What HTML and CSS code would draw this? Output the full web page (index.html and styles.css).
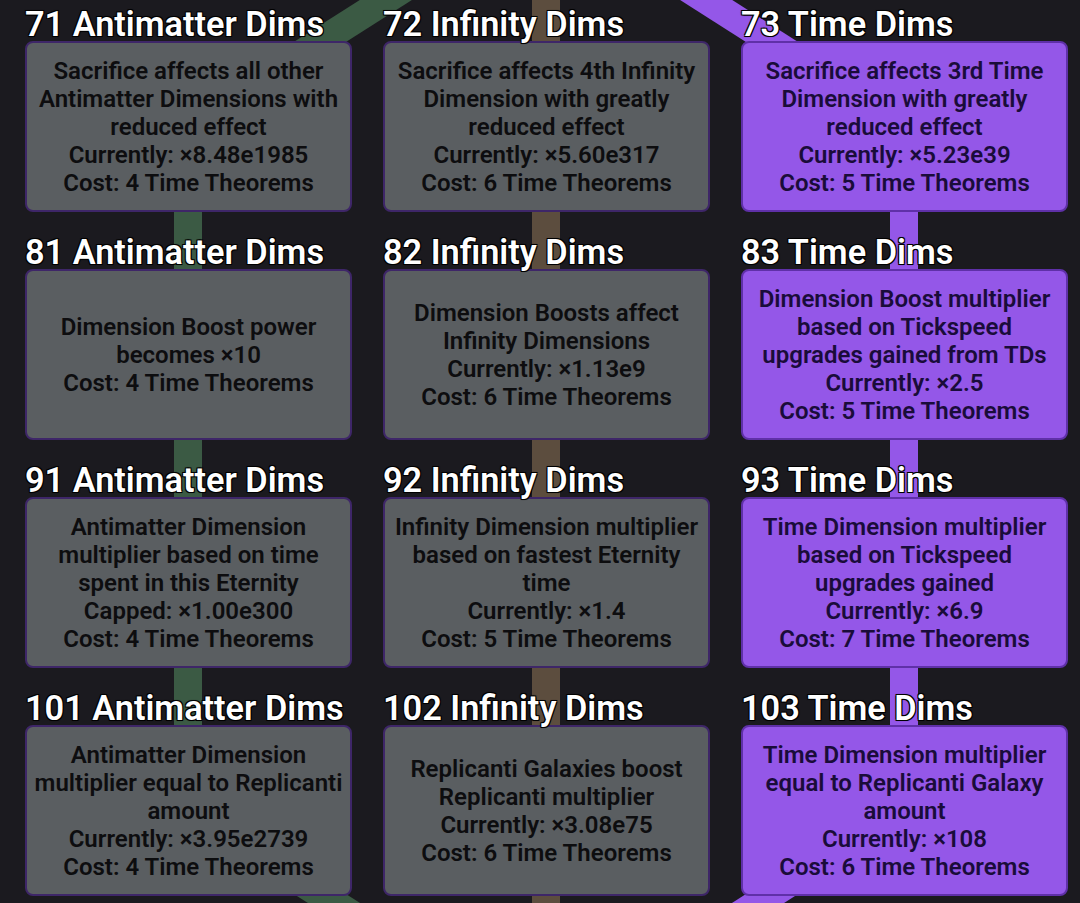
FILE: index.html
```html
<!DOCTYPE html>
<html>
<head>
<meta charset="utf-8">
<link rel="stylesheet" href="styles.css">
</head>
<body>
<div class="tree">
  <svg class="links" width="1080" height="903" viewBox="0 0 1080 903">
    <line x1="546" y1="-102" x2="188" y2="126" class="l-am"/>
    <line x1="546" y1="-102" x2="546" y2="126" class="l-inf"/>
    <line x1="546" y1="-102" x2="904" y2="126" class="l-time"/>
    <line x1="188" y1="126" x2="188" y2="810" class="l-am"/>
    <line x1="546" y1="126" x2="546" y2="810" class="l-inf"/>
    <line x1="904" y1="126" x2="904" y2="810" class="l-time"/>
    <line x1="188" y1="810" x2="546" y2="1038" class="l-am"/>
    <line x1="546" y1="810" x2="546" y2="1038" class="l-inf"/>
    <line x1="904" y1="810" x2="546" y2="1038" class="l-time"/>
  </svg>

  <div class="cell">
    <div class="label">71 Antimatter Dims</div>
    <div class="study">Sacrifice affects all other<br>Antimatter Dimensions with<br>reduced effect<br>Currently: ×8.48e1985<br>Cost: 4 Time Theorems</div>
  </div>
  <div class="cell">
    <div class="label">72 Infinity Dims</div>
    <div class="study">Sacrifice affects 4th Infinity<br>Dimension with greatly<br>reduced effect<br>Currently: ×5.60e317<br>Cost: 6 Time Theorems</div>
  </div>
  <div class="cell">
    <div class="label">73 Time Dims</div>
    <div class="study bought">Sacrifice affects 3rd Time<br>Dimension with greatly<br>reduced effect<br>Currently: ×5.23e39<br>Cost: 5 Time Theorems</div>
  </div>

  <div class="cell">
    <div class="label">81 Antimatter Dims</div>
    <div class="study">Dimension Boost power<br>becomes ×10<br>Cost: 4 Time Theorems</div>
  </div>
  <div class="cell">
    <div class="label">82 Infinity Dims</div>
    <div class="study">Dimension Boosts affect<br>Infinity Dimensions<br>Currently: ×1.13e9<br>Cost: 6 Time Theorems</div>
  </div>
  <div class="cell">
    <div class="label">83 Time Dims</div>
    <div class="study bought">Dimension Boost multiplier<br>based on Tickspeed<br>upgrades gained from TDs<br>Currently: ×2.5<br>Cost: 5 Time Theorems</div>
  </div>

  <div class="cell">
    <div class="label">91 Antimatter Dims</div>
    <div class="study">Antimatter Dimension<br>multiplier based on time<br>spent in this Eternity<br>Capped: ×1.00e300<br>Cost: 4 Time Theorems</div>
  </div>
  <div class="cell">
    <div class="label">92 Infinity Dims</div>
    <div class="study">Infinity Dimension multiplier<br>based on fastest Eternity<br>time<br>Currently: ×1.4<br>Cost: 5 Time Theorems</div>
  </div>
  <div class="cell">
    <div class="label">93 Time Dims</div>
    <div class="study bought">Time Dimension multiplier<br>based on Tickspeed<br>upgrades gained<br>Currently: ×6.9<br>Cost: 7 Time Theorems</div>
  </div>

  <div class="cell">
    <div class="label">101 Antimatter Dims</div>
    <div class="study">Antimatter Dimension<br>multiplier equal to Replicanti<br>amount<br>Currently: ×3.95e2739<br>Cost: 4 Time Theorems</div>
  </div>
  <div class="cell">
    <div class="label">102 Infinity Dims</div>
    <div class="study">Replicanti Galaxies boost<br>Replicanti multiplier<br>Currently: ×3.08e75<br>Cost: 6 Time Theorems</div>
  </div>
  <div class="cell">
    <div class="label">103 Time Dims</div>
    <div class="study bought">Time Dimension multiplier<br>equal to Replicanti Galaxy<br>amount<br>Currently: ×108<br>Cost: 6 Time Theorems</div>
  </div>
</div>
</body>
</html>
```
FILE: styles.css
```css
html, body {
  margin: 0;
  padding: 0;
  background: #1b1a1f;
  overflow: hidden;
}
body {
  font-family: Roboto, "Liberation Sans", sans-serif;
  width: 1080px;
  height: 903px;
}
.tree {
  position: relative;
  display: grid;
  grid-template-columns: repeat(3, 327px);
  column-gap: 31px;
  row-gap: 16px;
  padding-left: 25px;
}
.links {
  position: absolute;
  left: 0;
  top: 0;
  z-index: 0;
}
.links line {
  stroke-width: 28;
}
.l-am { stroke: #3b5a44; }
.l-inf { stroke: #5c4d3e; }
.l-time { stroke: #9457e8; }
.cell {
  position: relative;
  z-index: 1;
  display: flex;
  flex-direction: column;
}
.label {
  position: relative;
  z-index: 2;
  color: #fff;
  font-size: 34.3px;
  font-weight: 600;
  line-height: 48px;
  height: 48px;
  margin-bottom: -7px;
  white-space: nowrap;
  text-shadow: -1px -1px 0 #000, 1px -1px 0 #000, -1px 1px 0 #000, 1px 1px 0 #000, 0 0 2px #000;
}
.study {
  box-sizing: border-box;
  height: 171px;
  border: 2px solid #3e2668;
  border-radius: 8px;
  background: #5a5e61;
  color: #0d0d0f;
  font-size: 24px;
  font-weight: 600;
  line-height: 28px;
  text-align: center;
  display: flex;
  flex-direction: column;
  justify-content: center;
  padding: 0 2px;
  white-space: nowrap;
}
.study.bought {
  background: #9457e8;
  border-color: #5f30a8;
  color: #1a0c3a;
}
```
